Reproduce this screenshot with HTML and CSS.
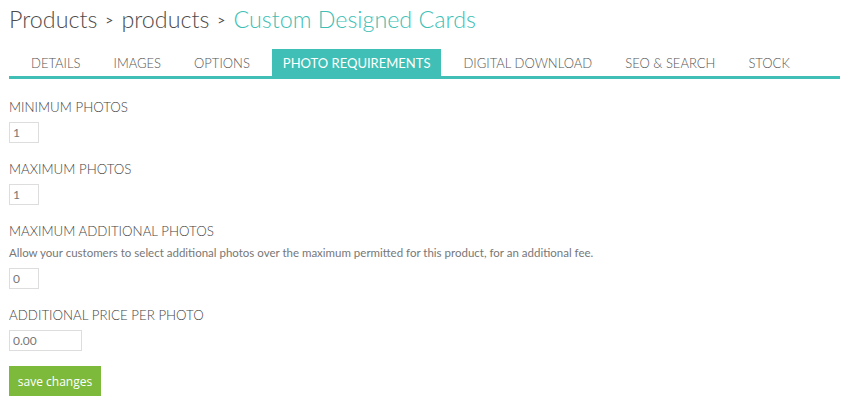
FILE: index.html
```html
<!DOCTYPE html>
<html>
<head>
<meta charset="utf-8">
<link rel="stylesheet" href="styles.css">
</head>
<body>
<div class="page">
  <h1 class="crumbs"><span>Products</span><span class="sep">&gt;</span><span>products</span><span class="sep">&gt;</span><span class="current">Custom Designed Cards</span></h1>
  <nav class="tabs">
    <a class="tab">DETAILS</a>
    <a class="tab">IMAGES</a>
    <a class="tab">OPTIONS</a>
    <a class="tab active">PHOTO REQUIREMENTS</a>
    <a class="tab">DIGITAL DOWNLOAD</a>
    <a class="tab">SEO &amp; SEARCH</a>
    <a class="tab">STOCK</a>
  </nav>
  <form class="form">
    <div class="field">
      <label class="label">MINIMUM PHOTOS</label>
      <input class="input small" type="text" value="1">
    </div>
    <div class="field">
      <label class="label">MAXIMUM PHOTOS</label>
      <input class="input small" type="text" value="1">
    </div>
    <div class="field">
      <label class="label">MAXIMUM ADDITIONAL PHOTOS</label>
      <p class="help">Allow your customers to select additional photos over the maximum permitted for this product, for an additional fee.</p>
      <input class="input small" type="text" value="0">
    </div>
    <div class="field last">
      <label class="label">ADDITIONAL PRICE PER PHOTO</label>
      <input class="input wide" type="text" value="0.00">
    </div>
    <button class="save" type="button">save changes</button>
  </form>
</div>
</body>
</html>
```
FILE: styles.css
```css
* { box-sizing: border-box; }
html, body { margin: 0; padding: 0; background: #fff; }
body { font-family: "Lato", "Open Sans", sans-serif; color: #555; }
.page { padding: 0 10px 0 9px; }
.crumbs {
  margin: 0;
  padding-top: 4px;
  font-weight: 300;
  font-size: 23.3px;
  line-height: 30px;
  color: #4d4d4d;
  display: flex;
  align-items: baseline;
}
.crumbs .sep { font-size: 14px; margin: 0 8px; position: relative; top: -3px; font-weight: 400; }
.crumbs .current { color: #40bfb6; }
.tabs {
  margin-top: 11px;
  display: flex;
  gap: 11px;
  padding-left: 11px;
  border-bottom: 3px solid #40bfb6;
}
.tab {
  display: block;
  padding: 0 11px;
  height: 27px;
  line-height: 28px;
  font-size: 13px;
  font-weight: 300;
  color: #555;
}
.tab.active { background: #40bfb6; color: #fff; font-weight: 400; }
.form { padding-top: 20px; }
.field { margin-bottom: 18px; }
.field.last { margin-bottom: 15px; }
.label {
  display: block;
  font-size: 13.3px;
  font-weight: 300;
  line-height: 16px;
  color: #444;
  margin-bottom: 7px;
}
.help {
  font-size: 11.5px;
  margin: 0 0 8px;
  line-height: 14px;
  color: #777;
}
.input {
  display: block;
  height: 21px;
  border: 1px solid #ddd;
  padding: 0 3px;
  font-family: "Lato", sans-serif;
  font-size: 12px;
  color: #777;
  outline: none;
}
.input.small { width: 30px; }
.input.wide { width: 73px; }
.save {
  display: block;
  margin-top: 0;
  width: 92px;
  height: 30px;
  border: 0;
  background: #7db93b;
  color: #fff;
  font-family: "Open Sans", sans-serif;
  font-size: 12px;
  padding: 0;
}
```
